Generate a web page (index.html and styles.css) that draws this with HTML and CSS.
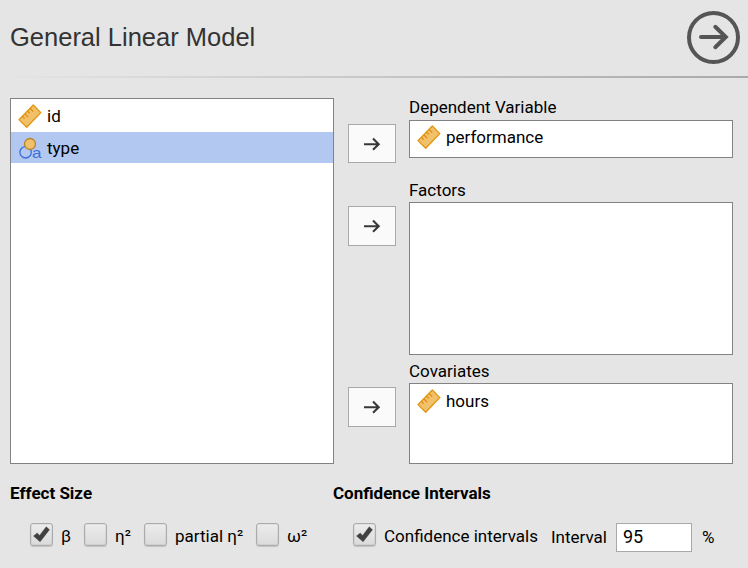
FILE: index.html
```html
<!DOCTYPE html>
<html lang="en">
<head>
<meta charset="utf-8">
<title>General Linear Model</title>
<link rel="stylesheet" href="styles.css">
</head>
<body>
<svg class="defs" width="0" height="0">
  <defs>
    <symbol id="ruler" viewBox="0 0 24 24">
      <path d="M15.3 1 L22.8 8.6 L8.7 23.2 L1 15.6 Z" fill="#f1c06a" stroke="#e1950f" stroke-width="1.3" stroke-linejoin="round"/>
      <path d="M4.4 12.4 l2.3 2.3 M6.9 9.8 l3.2 3.3 M9.5 7.1 l2.3 2.3 M12.1 4.4 l3.2 3.3" stroke="#df8b00" stroke-width="1.2" fill="none"/>
    </symbol>
    <symbol id="arrow" viewBox="0 0 18 14">
      <path d="M1 7.2 H15.5 M10 1.6 L15.7 7.2 L10 12.8" fill="none" stroke="#383838" stroke-width="2.1"/>
    </symbol>
    <symbol id="tick" viewBox="0 0 23 23">
      <path d="M3.5 13 L7.2 10 L9.6 12.4 L16.2 3.8 L19.5 6.7 L10.1 18.8 Z" fill="#404040" stroke="#404040" stroke-width=".4"/>
    </symbol>
  </defs>
</svg>
<header class="header">
  <h1 class="title">General Linear Model</h1>
  <svg class="go" viewBox="0 0 54 54">
    <circle cx="27.5" cy="27.5" r="24.5" fill="none" stroke="#555" stroke-width="4"/>
    <path d="M15 27 H39.5 M29.3 16.8 L39.8 27 L29.3 37.2" fill="none" stroke="#555" stroke-width="4" stroke-linecap="round"/>
  </svg>
</header>
<main class="main">
  <div class="box source">
    <div class="item"><svg class="icon"><use href="#ruler"/></svg>id</div>
    <div class="item selected"><svg class="icon" viewBox="0 0 24 24">
      <circle cx="7.6" cy="16.3" r="5.7" fill="none" stroke="#3e6fda" stroke-width="1.3"/>
      <circle cx="12" cy="8" r="5.5" fill="#f1c06a" stroke="#b58328" stroke-width="1.3"/>
      <text class="nominal" x="14" y="22.3" textLength="9.5" lengthAdjust="spacingAndGlyphs">a</text>
    </svg>type</div>
  </div>
  <section class="target dependent">
    <button class="assign"><svg><use href="#arrow"/></svg></button>
    <div class="field"><div class="label">Dependent Variable</div>
    <div class="box"><div class="item"><svg class="icon"><use href="#ruler"/></svg>performance</div></div></div>
  </section>
  <section class="target factors">
    <button class="assign"><svg><use href="#arrow"/></svg></button>
    <div class="field"><div class="label">Factors</div><div class="box"></div></div>
  </section>
  <section class="target covariates">
    <button class="assign"><svg><use href="#arrow"/></svg></button>
    <div class="field"><div class="label">Covariates</div>
    <div class="box"><div class="item"><svg class="icon"><use href="#ruler"/></svg>hours</div></div></div>
  </section>
</main>
<footer class="options">
  <section class="group effect">
    <h2>Effect Size</h2>
    <div class="row">
      <label class="check beta"><span class="tickbox"><svg><use href="#tick"/></svg></span>β</label>
      <label class="check eta"><span class="tickbox"></span>η²</label>
      <label class="check partial"><span class="tickbox"></span>partial η²</label>
      <label class="check"><span class="tickbox"></span>ω²</label>
    </div>
  </section>
  <section class="group">
    <h2>Confidence Intervals</h2>
    <div class="row">
      <label class="check ci"><span class="tickbox"><svg><use href="#tick"/></svg></span>Confidence intervals</label>
      <label class="interval"><span class="word">Interval</span><span class="input">95</span>%</label>
    </div>
  </section>
</footer>
</body>
</html>
```
FILE: styles.css
```css
* { box-sizing: border-box; }
body {
  margin: 0;
  width: 748px;
  height: 568px;
  overflow: hidden;
  background: #e5e5e5;
  color: #000;
  font: 17px/20px Roboto, sans-serif;
}
.defs { display: block; position: absolute; }
.header {
  display: flex;
  justify-content: space-between;
  align-items: flex-start;
  height: 78px;
  padding: 10px 8px 0 10px;
  border-bottom: 2px solid;
  border-image: linear-gradient(to right, #e5e5e5, #a9a9a9) 1;
}
.title {
  margin: 12px 0 0;
  font: 25.5px/30px "Liberation Sans", sans-serif;
  color: #333;
}
.go { width: 54px; height: 54px; }
.main {
  display: grid;
  grid-template-columns: 324px 385px;
  grid-template-rows: 60px 197px 109px;
  column-gap: 14px;
  padding: 20px 0 0 10px;
}
.box { background: #fff; border: 1px solid #828282; }
.source { grid-row: 1 / 4; padding-top: 1px; }
.item { display: flex; align-items: center; height: 31px; padding-left: 7px; }
.icon { width: 24px; height: 24px; margin-right: 5px; flex: none; }
.selected { margin-top: 1px; background: #b3c8f0; }
.nominal { font: 15px "Liberation Sans", sans-serif; fill: #3e6fda; }
.target { display: flex; gap: 13px; }
.field { display: flex; flex-direction: column; width: 324px; }
.field .box { flex: 1; }
.label { height: 22px; line-height: 18px; }
.factors .label { height: 44px; padding-top: 23px; }
.covariates .label { height: 28px; padding-top: 7px; }
.covariates .item { height: 33px; }
.assign {
  display: flex;
  align-items: center;
  justify-content: center;
  width: 48px;
  height: 40px;
  margin: 26px 0 0;
  padding: 0;
  background: #fafafa;
  border: 1px solid #a9a9a9;
}
.dependent .assign { height: 39px; }
.factors .assign { margin-top: 48px; }
.covariates .assign { margin-top: 32px; }
.assign svg { width: 18px; height: 14px; }
.options { display: flex; padding: 19px 0 0 10px; }
.effect { width: 323px; }
h2 { margin: 0; font: bold 17px/20px Roboto, sans-serif; }
.row { display: flex; padding: 17px 0 0 20px; height: 55px; }
.check { display: flex; height: 34px; line-height: 32px; }
.beta { width: 54px; }
.eta { width: 60px; }
.partial { width: 112px; }
.ci { width: 198px; }
.tickbox {
  width: 23px;
  height: 23px;
  margin: 3px 8px 0 0;
  flex: none;
  border: 1px solid #acacac;
  border-radius: 3px;
  background: linear-gradient(#ececec, #dbdbdb);
  box-shadow: 0 1px 1px rgba(0, 0, 0, .15), inset 0 0 0 1px rgba(0, 0, 0, .05);
}
.tickbox svg { display: block; width: 23px; height: 23px; margin: -1px; }
.interval { display: flex; line-height: 34px; }
.word { width: 65px; }
.input {
  width: 76px;
  height: 29px;
  margin: 3px 10px 0 0;
  padding-left: 6px;
  font-size: 18px;
  line-height: 26px;
  background: #fff;
  border: 1px solid #a9a9a9;
}
```
